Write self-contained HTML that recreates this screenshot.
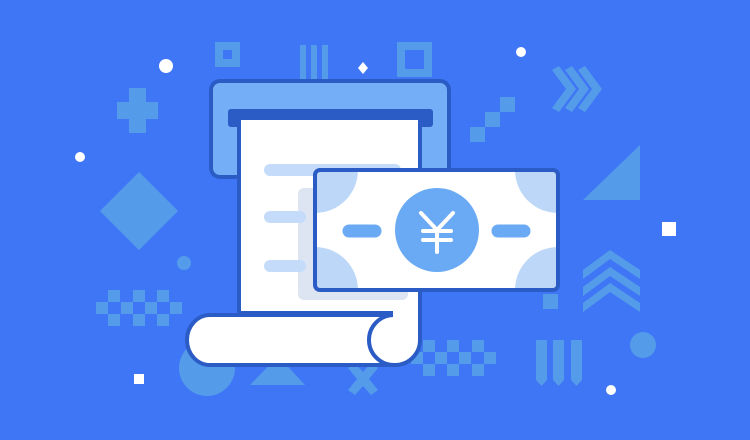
<!DOCTYPE html>
<html><head><meta charset="utf-8"><style>html,body{margin:0;padding:0;background:#3f76f6}svg{display:block}</style></head>
<body>
<svg width="750" height="440" viewBox="0 0 750 440" xmlns="http://www.w3.org/2000/svg">
<rect width="750" height="440" fill="#3f76f6"/>
<g fill="#549bea">
  <path d="M215 42h25v25h-25zM223 50v9h9v-9z" fill-rule="evenodd"/>
  <rect x="300" y="45" width="6" height="35"/><rect x="311" y="45" width="6" height="35"/><rect x="322" y="45" width="6" height="35"/>
  <path d="M397 42h35v35h-35zM405 50v19h19v-19z" fill-rule="evenodd"/>
  <path d="M129 88h17v14h12v17h-12v14h-17v-14h-12v-17h12z"/>
  <path d="M139 172l39 39-39 39-39-39z"/>
  <circle cx="184" cy="263" r="7"/>
  <g>
   <rect x="108" y="290" width="12" height="12"/><rect x="133" y="290" width="12" height="12"/><rect x="157" y="290" width="12" height="12"/>
   <rect x="96" y="302" width="12" height="12"/><rect x="121" y="302" width="12" height="12"/><rect x="145" y="302" width="12" height="12"/><rect x="170" y="302" width="12" height="12"/>
   <rect x="108" y="314" width="12" height="12"/><rect x="133" y="314" width="12" height="12"/><rect x="157" y="314" width="12" height="12"/>
  </g>
  <circle cx="207" cy="368" r="28"/>
  <path d="M278 356l27 29h-55z"/>
  <path d="M348 368l7-5 8 9 8-9 7 5-9 11 9 11-7 5-8-9-8 9-7-5 9-11z"/>
  <g>
   <rect x="423" y="340" width="12" height="12"/><rect x="447" y="340" width="12" height="12"/><rect x="472" y="340" width="12" height="12"/>
   <rect x="411" y="352" width="12" height="12"/><rect x="435" y="352" width="12" height="12"/><rect x="459" y="352" width="12" height="12"/><rect x="484" y="352" width="12" height="12"/>
   <rect x="423" y="364" width="12" height="12"/><rect x="447" y="364" width="12" height="12"/><rect x="472" y="364" width="12" height="12"/>
  </g>
  <path d="M536 340h11v40l-5.5 6-5.5-6zM553 340h11v40l-5.5 6-5.5-6zM571 340h11v40l-5.5 6-5.5-6z"/>
  <circle cx="643" cy="345" r="13"/>
  <rect x="543" y="294" width="15" height="15"/>
  <path d="M583 270l27-20 30 20v9l-30-20-27 20zM583 287l27-20 30 20v9l-30-20-27 20zM583 303l27-20 30 20v9l-30-20-27 20z"/>
  <path d="M640 145v55h-57z"/>
  <path d="M500 97h15v15h-15zM485 112h15v15h-15zM470 127h15v15h-15z"/>
  <path d="M552 70l7-4 17 23-17 23-7-4 14-19zM565 70l7-4 17 23-17 23-7-4 14-19zM578 70l7-4 17 23-17 23-7-4 14-19z"/>
</g>
<g fill="#fff">
  <circle cx="166" cy="66" r="7"/><circle cx="521" cy="52" r="5"/><circle cx="80" cy="157" r="5"/><circle cx="611" cy="390" r="5"/>
  <path d="M363 62l5 6-5 6-5-6z"/>
  <rect x="662" y="222" width="14" height="14"/><rect x="134" y="374" width="10" height="10"/>
</g>
<!-- printer -->
<rect x="211" y="81" width="238" height="96" rx="9" fill="#74aef7" stroke="#2b5cc6" stroke-width="4"/>
<rect x="228" y="109" width="205" height="18" rx="3" fill="#2b5cc6"/>
<!-- paper + roll outline -->
<path d="M239 315V118H420V340A25 25 0 0 1 395 365H210A23 25 0 0 1 210 315H393" fill="#fff" stroke="#2b5cc6" stroke-width="4" stroke-linejoin="round"/>
<rect x="298" y="188" width="110" height="112" rx="6" fill="#dde5f3"/>
<g stroke="#c4dcf9" stroke-width="12" stroke-linecap="round">
 <line x1="270" y1="170" x2="395" y2="170"/><line x1="270" y1="217" x2="300" y2="217"/><line x1="270" y1="266" x2="300" y2="266"/>
</g>
<path d="M241 313H393" stroke="#2b5cc6" stroke-width="4"/>
<path d="M393 315A25 25 0 0 0 395 365" fill="none" stroke="#2b5cc6" stroke-width="4"/>
<!-- bill -->
<clipPath id="b"><rect x="315" y="170" width="243" height="120" rx="5"/></clipPath>
<rect x="315" y="170" width="243" height="120" rx="5" fill="#fff"/>
<g clip-path="url(#b)" fill="#bcd7f8">
 <circle cx="315" cy="170" r="43"/><circle cx="315" cy="290" r="43"/><circle cx="558" cy="170" r="43"/><circle cx="558" cy="290" r="43"/>
</g>
<rect x="315" y="170" width="243" height="120" rx="5" fill="none" stroke="#2b5cc6" stroke-width="4"/>
<circle cx="437" cy="230" r="42" fill="#6aaaf5"/>
<g stroke="#6aaaf5" stroke-width="13" stroke-linecap="round"><line x1="349" y1="231" x2="375" y2="231"/><line x1="498" y1="231" x2="524" y2="231"/></g>
<g stroke="#fff" stroke-width="4" stroke-linecap="round" fill="none">
 <path d="M421 213l16 17 16-17M437 230v22M423 231h28M423 240h28"/>
</g>
</svg>
</body></html>
